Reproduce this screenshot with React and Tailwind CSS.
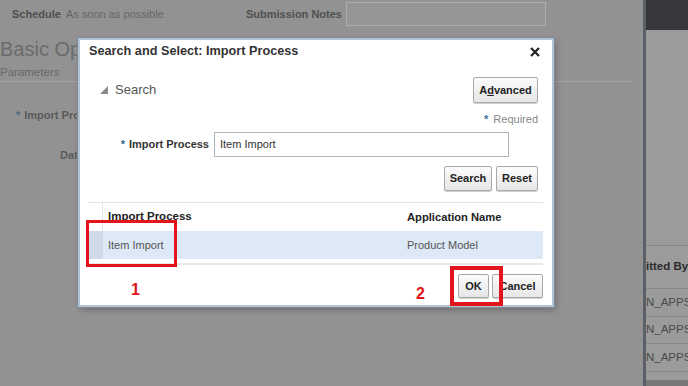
function Btn({ children, className = "" }) {
  return (
    <button
      className={`flex items-center justify-center border border-[#a8a8a8] rounded-[2px] bg-gradient-to-b from-[#fcfcfc] to-[#e6e6e6] text-[11px] font-bold text-[#222] shadow-[0_1px_0_#d0d0d0] ${className}`}
    >
      {children}
    </button>
  );
}

export default function App() {
  return (
    <div className="relative w-[688px] h-[386px] overflow-hidden flex bg-[#929292] font-['Liberation_Sans',Arial,sans-serif]">
      {/* background page (dimmed) */}
      <div className="w-[643px] flex flex-col">
        <div className="h-[28px] flex items-center pl-[12px]">
          <div className="w-[234px] flex items-center text-[11px]">
            <span className="font-bold text-[#4f4f4f]">Schedule</span>
            <span className="ml-[5px] text-[#666]">As soon as possible</span>
          </div>
          <span className="w-[100px] text-[11px] font-bold text-[#4f4f4f]">Submission Notes</span>
          <div className="w-[200px] h-[24px] border border-[#adadad] bg-[#959595]" />
        </div>
        <div className="mt-[9px] w-[78px] overflow-hidden text-[20px] leading-[24px] text-[#6b6b6b] whitespace-nowrap">Basic Options</div>
        <div className="mt-[4px] text-[11.5px] leading-[14px] text-[#686868]">Parameters</div>
        <div className="mt-[2px] h-[1px] w-[633px] bg-[#a2a2a2]" />
        <div className="mt-[26px] pl-[16px] text-[11px] leading-[14px] flex items-center">
          <span className="text-[#4d6a85] font-bold">*</span>
          <span className="ml-[4px] font-bold text-[#5a5a5a]">Import Process</span>
        </div>
        <div className="mt-[26px] pl-[60px] text-[11px] leading-[14px] font-bold text-[#5c5c5c]">Date</div>
      </div>
      <div className="w-[3px] bg-[#5a6066]" />
      <div className="flex-1 flex flex-col bg-[#9b9b9b] overflow-hidden">
        <div className="h-[30px] bg-[#37383c]" />
        <div className="h-[215px]" />
        <div className="h-[43px] border-t border-[#878787] flex items-center text-[11.5px] font-bold text-[#2b2b2b] whitespace-nowrap">itted By</div>
        <div className="h-[28px] border-t border-[#878787] flex items-center text-[11.5px] text-[#4a4a4a] whitespace-nowrap">N_APPS</div>
        <div className="h-[27px] border-t border-[#878787] flex items-center text-[11.5px] text-[#4a4a4a] whitespace-nowrap">N_APPS</div>
        <div className="h-[28px] border-t border-[#878787] flex items-center text-[11.5px] text-[#4a4a4a] whitespace-nowrap">N_APPS</div>
        <div className="h-[9px] border-t border-[#878787]" />
        <div className="flex-1 bg-[#787878]" />
      </div>

      {/* dialog */}
      <div className="absolute left-[78px] top-[38px] w-[476px] h-[269px] bg-white border-2 border-[#b4c3d2] shadow-[0_0_0_1px_#7f8a94,2px_3px_6px_rgba(0,0,0,0.25)] flex flex-col">
        <div className="h-[24px] flex items-center justify-between pl-[9px] pr-[12px]">
          <span className="text-[12.7px] font-bold text-[#333]">Search and Select: Import Process</span>
          <svg width="10" height="10" viewBox="0 0 10 10">
            <path d="M1 1 L9 9 M9 1 L1 9" stroke="#222" strokeWidth="2.2" />
          </svg>
        </div>
        <div className="mt-[13px] h-[26px] flex items-center justify-between pl-[20px] pr-[14px]">
          <div className="flex items-center">
            <svg width="8" height="8" viewBox="0 0 8 8">
              <polygon points="8,0 8,8 0,8" fill="#8a8a8a" />
            </svg>
            <span className="ml-[7px] text-[13px] text-[#555]">Search</span>
          </div>
          <Btn className="w-[65px] h-[26px]">
            <span>
              A<span className="underline">d</span>vanced
            </span>
          </Btn>
        </div>
        <div className="mt-[8px] h-[16px] flex items-center justify-end pr-[14px] text-[11px]">
          <span className="text-[#3a6ea5] font-bold">*</span>
          <span className="ml-[5px] text-[#888]">Required</span>
        </div>
        <div className="mt-[5px] h-[25px] flex items-center">
          <div className="w-[129px] flex justify-end items-center text-[11px]">
            <span className="text-[#2f5f8f] font-bold">*</span>
            <span className="ml-[4px] font-bold text-[#333]">Import Process</span>
          </div>
          <div className="ml-[5px] w-[295px] h-[25px] border border-[#a9b4bf] flex items-center pl-[5px] text-[11px] text-[#333]">
            Item Import
          </div>
        </div>
        <div className="mt-[9px] h-[25px] flex justify-end gap-[4px] pr-[14px]">
          <Btn className="w-[48px] h-[25px]">Search</Btn>
          <Btn className="w-[42px] h-[25px]">Reset</Btn>
        </div>
        <div className="mt-[11px] ml-[8px] mr-[9px] border-t border-[#e2e2e2]">
          <div className="h-[28px] flex">
            <div className="w-[15px] border-r border-[#e3e3e3]" />
            <div className="w-[299px] flex items-center pl-[5px] text-[11.5px] font-bold text-[#222]">Import Process</div>
            <div className="flex-1 flex items-center pl-[5px] text-[11.2px] font-bold text-[#222]">Application Name</div>
          </div>
          <div className="h-[28px] flex bg-[#dde9f6]">
            <div className="w-[15px] bg-[#cfdbe8]" />
            <div className="w-[299px] flex items-center pl-[5px] text-[11px] text-[#555]">Item Import</div>
            <div className="flex-1 flex items-center pl-[5px] text-[11px] text-[#555]">Product Model</div>
          </div>
          <div className="mt-[4px] h-[2px] bg-[#e8e8e8]" />
        </div>
        <div className="mt-[9px] h-[24px] flex justify-end gap-[3px] pr-[9px]">
          <Btn className="w-[31px] h-[24px]">OK</Btn>
          <Btn className="w-[51px] h-[24px]">Cancel</Btn>
        </div>
      </div>

      {/* annotations */}
      <div className="absolute left-[86px] top-[220px] w-[91px] h-[47px] border-[3px] border-[#e3141b]" />
      <div className="absolute left-[450px] top-[266px] w-[53px] h-[40px] border-[4px] border-[#e3141b]" />
      <span className="absolute left-[131px] top-[281px] text-[16px] leading-[18px] font-bold text-[#e3141b]">1</span>
      <span className="absolute left-[416px] top-[285px] text-[16px] leading-[18px] font-bold text-[#e3141b]">2</span>
    </div>
  );
}
